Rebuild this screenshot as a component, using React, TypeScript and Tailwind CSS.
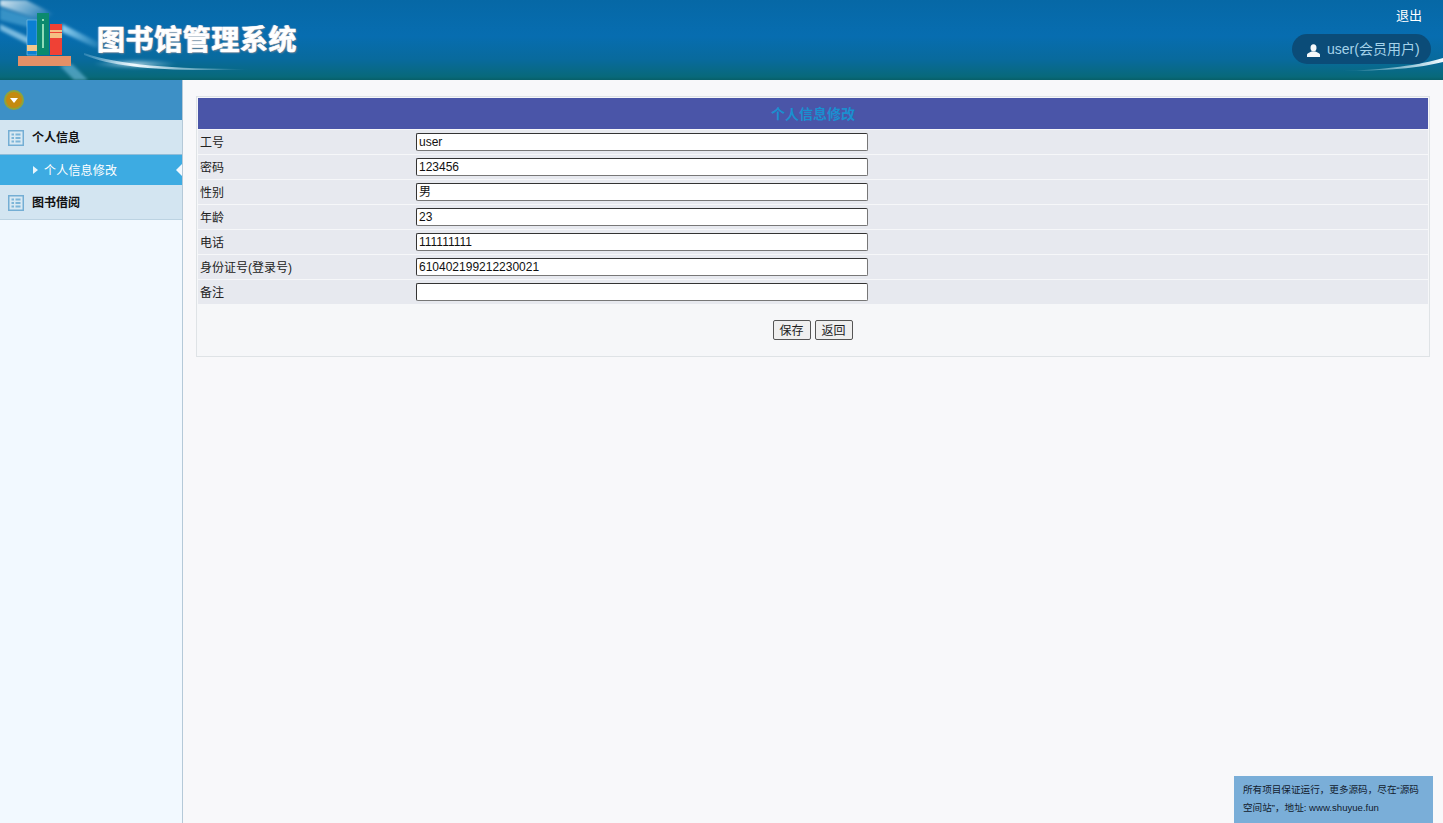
import React from "react";

const rows: [string, string][] = [
  ["工号", "user"],
  ["密码", "123456"],
  ["性别", "男"],
  ["年龄", "23"],
  ["电话", "111111111"],
  ["身份证号(登录号)", "610402199212230021"],
  ["备注", ""],
];

function ListIcon() {
  return (
    <svg width="16" height="16" viewBox="0 0 16 16" className="shrink-0">
      <rect x="0.75" y="0.75" width="14.5" height="14.5" fill="#d9e9f3" stroke="#74aed4" strokeWidth="1.5" />
      <path d="M3.5 4.5h2.5M3.5 8h2.5M3.5 11.5h2.5M7.5 4.5h5M7.5 8h5M7.5 11.5h5" stroke="#7db5d8" strokeWidth="1.8" />
    </svg>
  );
}

function Banner() {
  return (
    <svg className="absolute inset-0 h-full w-full" viewBox="0 0 1443 80" preserveAspectRatio="none">
      <defs>
        <linearGradient id="b" x1="0" y1="0" x2="0" y2="1">
          <stop offset="0" stopColor="#0668a6" />
          <stop offset="0.45" stopColor="#076db0" />
          <stop offset="0.75" stopColor="#086a9c" />
          <stop offset="0.96" stopColor="#08697a" />
          <stop offset="1" stopColor="#075f68" />
        </linearGradient>
        <linearGradient id="s1" x1="0" y1="0" x2="1" y2="0.4">
          <stop offset="0" stopColor="#fff" stopOpacity="0.85" />
          <stop offset="0.6" stopColor="#cbe8f6" stopOpacity="0.45" />
          <stop offset="1" stopColor="#fff" stopOpacity="0" />
        </linearGradient>
        <linearGradient id="s2" x1="0" y1="0" x2="1" y2="0">
          <stop offset="0" stopColor="#8fd0f0" stopOpacity="1" />
          <stop offset="1" stopColor="#7cc4e8" stopOpacity="0.15" />
        </linearGradient>
        <linearGradient id="s3" x1="0" y1="0" x2="1" y2="0">
          <stop offset="0" stopColor="#bfe6f7" stopOpacity="0.2" />
          <stop offset="0.3" stopColor="#f0faff" stopOpacity="1" />
          <stop offset="1" stopColor="#bfe6f7" stopOpacity="0" />
        </linearGradient>
        <linearGradient id="s4" x1="0" y1="0" x2="1" y2="0">
          <stop offset="0" stopColor="#bfe6f7" stopOpacity="0" />
          <stop offset="1" stopColor="#f2fbff" stopOpacity="1" />
        </linearGradient>
        <radialGradient id="g1">
          <stop offset="0" stopColor="#fff" stopOpacity="0.75" />
          <stop offset="1" stopColor="#8fd0ee" stopOpacity="0" />
        </radialGradient>
        <filter id="bl" x="-20%" y="-50%" width="140%" height="200%"><feGaussianBlur stdDeviation="1.6" /></filter>
        <filter id="bl2" x="-20%" y="-50%" width="140%" height="200%"><feGaussianBlur stdDeviation="0.4" /></filter>
      </defs>
      <rect width="1443" height="80" fill="url(#b)" />
      <g filter="url(#bl)">
        <path d="M0 0H26L62 18 40 20 0 6Z" fill="url(#s1)" />
        <path d="M0 8 38 20 40 30 0 20Z" fill="#5fb3de" fillOpacity="0.55" />
        <path d="M0 24 30 38 30 45 0 30Z" fill="#a9dcf3" fillOpacity="0.7" />
        <path d="M62 24 100 43 96 48 62 32Z" fill="url(#s2)" />
        <path d="M60 66 72 64 88 80H74Z" fill="#74bedf" fillOpacity="0.6" />
        <ellipse cx="135" cy="64" rx="42" ry="5" fill="url(#g1)" />
      </g>
      <g filter="url(#bl2)">
        <path d="M84 53C120 65 170 69 250 69 C170 72 115 68 84 55Z" fill="url(#s3)" />
        <path d="M1340 71C1385 70 1420 65 1443 58V62C1420 68 1385 71 1340 71Z" fill="url(#s4)" />
      </g>
      <path d="M18 56H71V66H18Z" fill="#e49067" />
      <path d="M27 20H37V55H27Z" fill="#0b7fd2" stroke="#8cc8e8" strokeWidth="0.6" />
      <path d="M27 45H37V51H27Z" fill="#f1c78d" />
      <path d="M37 13H49V55H37Z" fill="#0b8a6e" />
      <path d="M42 19H44V21H42ZM42 24H44V48H42Z" fill="#8fdcb8" />
      <path d="M50 24H62V55H50Z" fill="#ef4135" />
      <path d="M50 30H62V32H50ZM50 33H62V38H50Z" fill="#f5bf82" />
    </svg>
  );
}

export default function App() {
  return (
    <div className="flex h-[823px] w-[1443px] flex-col overflow-hidden bg-[#f8f8fa] font-['Liberation_Sans','Noto_Sans_CJK_SC',sans-serif] text-[12px] text-[#111]">
      <header className="relative h-20 shrink-0">
        <Banner />
        <div className="relative flex h-full items-start justify-between">
          <h1 className="ml-[97px] mt-[24px] text-[28px] leading-[34px] font-bold tracking-[0.6px] text-white [-webkit-text-stroke:0.6px_#fff] [text-shadow:1px_1px_2px_#7b8694,-1px_0_1px_#aab]">
            图书馆管理系统
          </h1>
          <div className="mr-3 flex flex-col items-end">
            <span className="mr-[9px] mt-[8px] text-[13px] leading-4 text-white">退出</span>
            <div className="mt-[10px] flex h-[30px] w-[139px] items-center rounded-full bg-[#0b4c78] pl-[15px] text-[14px] text-[#a5d3ea]">
              <svg width="13" height="13" viewBox="0 0 13 13" className="mr-[7px] mt-[2px] shrink-0">
                <ellipse cx="6.5" cy="3.8" rx="3" ry="3.6" fill="#f4f8fa" />
                <path d="M0 13V10.6C0 9.2 2.5 8.4 4.5 7.4H8.5C10.5 8.4 13 9.2 13 10.6V13Z" fill="#f4f8fa" />
              </svg>
              user(会员用户)
            </div>
          </div>
        </div>
      </header>

      <div className="flex min-h-0 flex-1">
        <aside className="w-[183px] shrink-0 border-r border-[#b5c9d8] bg-[#f2f9ff]">
          <div className="flex h-10 items-center bg-[#3d90c6] pl-[4px]">
            <span className="flex h-[20px] w-[20px] items-center justify-center rounded-full border-2 border-[#8ea33c] bg-[#c48a10]">
              <svg width="8" height="5" viewBox="0 0 8 5"><path d="M0 0H8L4 5Z" fill="#fff" /></svg>
            </span>
          </div>
          <div className="flex h-[35px] items-center gap-2 border-b border-[#8fbcd8] bg-[#d3e5f1] pl-2 pt-[2px] font-bold text-[#111]">
            <ListIcon />
            个人信息
          </div>
          <div className="relative flex h-[30px] items-center bg-[#3dabe2] pl-[33px] text-[12px] text-white">
            <svg width="5" height="8" viewBox="0 0 5 8" className="mr-[6px]"><path d="M0 0L5 4L0 8Z" fill="#e8f5fc" /></svg>
            <span className="pt-[2px] tracking-[0.2px]">个人信息修改</span>
            <span className="absolute right-0 top-[9px] h-0 w-0 border-y-[6px] border-r-[6px] border-y-transparent border-r-[#f2f9ff]" />
          </div>
          <div className="flex h-[35px] items-center gap-2 border-b border-[#bcd3e2] bg-[#d3e5f1] pl-2 pt-[2px] font-bold text-[#111]">
            <ListIcon />
            图书借阅
          </div>
        </aside>

        <main className="relative min-w-0 flex-1 pl-[13px] pr-[13px] pt-[16px]">
          <div className="h-[261px] border border-[#dfe3e6] bg-[#f6f7f9] p-px">
            <div className="flex h-[31px] items-center justify-center bg-[#4a55a8] pt-[2px] text-[14px] font-bold text-[#1a8fd0]">
              个人信息修改
            </div>
            <div className="mt-px flex flex-col gap-px">
              {rows.map(([label, value]) => (
                <div key={label} className="flex h-6 items-center bg-[#e7e9ef]">
                  <span className="w-[218px] shrink-0 pl-[2px] pt-[2px] text-[#222]">{label}</span>
                  <input
                    readOnly
                    value={value}
                    className="h-[18px] w-[452px] rounded-[2px] border border-[#333] border-b-[#777] border-r-[#777] bg-white px-[2px] text-[12px] text-[#111] outline-none"
                  />
                </div>
              ))}
            </div>
            <div className="mt-[16px] flex justify-center gap-[4px] pr-[1px]">
              <button className="h-[20px] w-[38px] rounded-[2px] border border-[#555] bg-[#efefef] pt-[1px] text-[12px] text-[#222]">保存</button>
              <button className="h-[20px] w-[38px] rounded-[2px] border border-[#555] bg-[#efefef] pt-[1px] text-[12px] text-[#222]">返回</button>
            </div>
          </div>
          <div className="absolute bottom-0 right-[10px] h-[47px] w-[199px] bg-[#7aaed8] pl-[9px] pr-[10px] py-[5px] text-[9.6px] leading-[18px] text-[#12202e]">
            所有项目保证运行，更多源码，尽在“源码空间站”，地址: www.shuyue.fun
          </div>
        </main>
      </div>
    </div>
  );
}
